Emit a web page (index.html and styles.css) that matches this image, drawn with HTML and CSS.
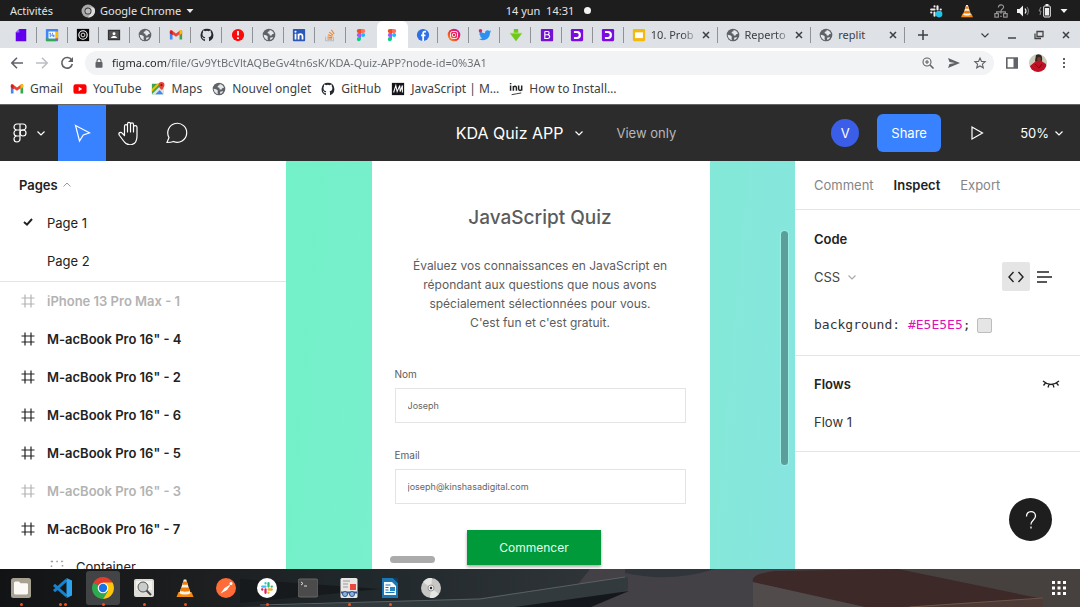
FILE: index.html
```html
<!DOCTYPE html>
<html lang="fr">
<head>
<meta charset="utf-8">
<title>KDA Quiz APP – Figma</title>
<link rel="stylesheet" href="styles.css">
</head>
<body>
<svg class="sprite" aria-hidden="true">
  <symbol id="globe" viewBox="0 0 16 16"><circle cx="8" cy="8" r="7.2" fill="#5f6368"/><path d="M8.600 2.200c2.600.2 4.600 2.200 5.100 4.400l-2 .6-1.200 1.600-1.800-.4-.3-1.800-2-.6.300-1.600 1.900-.6zM1.900 7.600l2.900.6 2 1.700-.5 1.400.4 2.600C4 13.300 2 10.800 1.900 7.600zM9.200 11l2.600-.5 1 .4c-.7 1.300-1.900 2.300-3.300 2.800z" fill="#e6e8eb"/></symbol>
  <symbol id="gmail" viewBox="0 0 16 16"><path d="M1 3.500v9.500h3V6z" fill="#4285f4"/><path d="M15 3.500v9.500h-3V6z" fill="#34a853"/><path d="M1 3.800C1 2.500 2.500 2 3.500 2.800L8 6.200l4.500-3.400c1-.8 2.500-.3 2.500 1V6l-3 2.200V7l-4 3-4-3v1.200L1 6z" fill="#ea4335"/><path d="M12 3.200l.5-.4c1-.8 2.500-.3 2.500 1V6l-3 2.200z" fill="#fbbc04"/><path d="M1 4v2l3 2.200v-5z" fill="#c5221f"/></symbol>
  <symbol id="github" viewBox="0 0 16 16"><path fill="#24292f" d="M8 .8a7.300 7.300 0 0 0-2.400 14.200V12.700c-2 .4-2.600-.9-2.800-1.400-.2-.5-.7-1-1-1.200.8-.4 1.500.5 1.800.9.600.9 1.400.8 2 .5.100-.5.300-.8.500-1-1.700-.2-3.300-.9-3.300-3.600 0-.8.300-1.500.8-2-.1-.3-.4-1 .1-2.100.6-.2 1.500.4 2.100.8a7 7 0 0 1 4.200 0c.6-.4 1.500-1 2.100-.8.400 1.100.2 1.800.1 2.100.5.500.8 1.200.8 2 0 2.700-1.600 3.400-3.300 3.600.4.3.6.8.6 1.500V15A7.300 7.300 0 0 0 8 .8z"/></symbol>
  <symbol id="figma" viewBox="0 0 16 16"><path d="M5.500 1H8v4.700H5.500a2.350 2.350 0 0 1 0-4.700z" fill="#f24e1e"/><path d="M8 1h2.500a2.350 2.350 0 0 1 0 4.700H8z" fill="#ff7262"/><path d="M5.500 5.700H8v4.600H5.500a2.300 2.300 0 0 1 0-4.600z" fill="#a259ff"/><circle cx="10.400" cy="8" r="2.350" fill="#1abcfe"/><path d="M5.500 10.300H8v2.400a2.400 2.400 0 1 1-2.500-2.400z" fill="#0acf83"/></symbol>
  <symbol id="dlet" viewBox="0 0 16 16"><rect x="1" y="1" width="14" height="14" rx="1.500" fill="#7c0be0"/><path d="M4.500 3.500H8a4.500 4.500 0 0 1 0 9H4.500v-2.300h3.300a2.200 2.200 0 0 0 0-4.400H4.500z" fill="#fff"/></symbol>
  <symbol id="vlc" viewBox="0 0 20 20"><path d="M3.500 14h13l2 5h-17z" fill="#f58a0b"/><path d="M8.800 1.500h2.400L15.500 15c-1.500 2-9.500 2-11 0z" fill="#f7f3ec"/><path d="M8.200 3.500h3.600l1 3.200H7.200zM6.300 9.500h7.400l1 3.300c-1.700 1.200-7.700 1.200-9.400 0z" fill="#f07c08"/></symbol>
  <symbol id="down" viewBox="0 0 10 10"><path d="M1.500 3.500L5 7l3.500-3.500" fill="none" stroke="currentColor" stroke-width="1.200"/></symbol>
  <symbol id="cross" viewBox="0 0 10 10"><path d="M2 2l6 6M8 2L2 8" fill="none" stroke="currentColor" stroke-width="1.500"/></symbol>
  <symbol id="frame" viewBox="0 0 14 14"><path d="M4 .5v13M10 .5v13M.5 4h13M.5 10h13" fill="none" stroke="currentColor" stroke-width="1.200"/></symbol>
  <symbol id="slack" viewBox="0 0 16 16"><g fill="none" stroke-width="2.600" stroke-linecap="round"><path d="M6.300 2.500v.3M2.500 6.300h3.800" stroke="#36c5f0"/><path d="M9.700 2.500v3.800M13.300 6.300h.2" stroke="#2eb67d"/><path d="M9.700 9.700h3.800M9.700 13.500v-.2" stroke="#ecb22e"/><path d="M6.300 9.700v3.800M2.500 9.700h.2" stroke="#e01e5a"/></g></symbol>
</svg>

<header class="system">
  <div class="system-left"><button class="sys-btn">Activités</button>
    <button class="sys-btn"><svg class="i13" viewBox="0 0 14 14"><circle cx="7" cy="7" r="6.500" fill="#aaa"/><path d="M7 3.500h6A6.500 6.500 0 0 1 7 13.500L10 9z" fill="#ddd"/><circle cx="7" cy="7" r="3.500" fill="#333"/><circle cx="7" cy="7" r="2.600" fill="#bbb"/></svg>Google Chrome<svg class="i8" viewBox="0 0 8 8"><path d="M.5 2h7L4 6z" fill="#e8e8e8"/></svg></button></div>
  <button class="sys-btn clock">14 yun&nbsp; 14:31</button>
  <div class="system-right"><span class="notice"></span>
    <div class="tray">
      <svg class="i13" viewBox="0 0 16 16"><path d="M6.300 2.500v.3M2.500 6.300h3.800M9.700 2.500v3.800M13.300 6.300h.2M6.300 9.700v3.800M2.500 9.700h.2" stroke="#eee" stroke-width="2.400" stroke-linecap="round"/><circle cx="11.500" cy="11.500" r="3.800" fill="#20c5e8"/></svg>
      <svg class="i13 gap-a" viewBox="0 0 20 20"><use href="#vlc"/></svg>
      <svg class="i13" viewBox="0 0 16 16"><g fill="none" stroke="#999" stroke-width="1.300"><path d="M5 4c0-4 6-4 6-.5C11 6 8 5.500 8 8M3 11V9h10v2M8 8v3"/><rect x="1" y="11" width="4" height="4"/><rect x="11" y="11" width="4" height="4"/><path d="M7 14h2"/></g></svg>
      <svg class="i13" viewBox="0 0 14 14"><path d="M1 5h2.500L7 1.500v11L3.500 9H1z" fill="#f2f2f2"/><path d="M9 4.500q2 2.500 0 5" fill="none" stroke="#f2f2f2" stroke-width="1.200"/><path d="M11 3q3 4 0 8" fill="none" stroke="#777" stroke-width="1.200"/></svg>
      <svg class="i13" viewBox="0 0 14 14"><path d="M3 3L1 7h2l-1 4" fill="none" stroke="#888"/><rect x="5.700" y="2" width="6.600" height="11" rx="1" fill="none" stroke="#eee"/><path d="M7 4h4v7.500H7zM7.500 0h3v2h-3z" fill="#eee"/></svg>
      <svg class="i8" viewBox="0 0 8 8"><path d="M.5 2h7L4 6z" fill="#f2f2f2"/></svg>
    </div></div>
</header>

<nav class="tabstrip" aria-label="Onglets">
  <div class="tabs">
    <button class="tab" aria-label="Formulaire"><svg viewBox="0 0 16 16"><path d="M6 1h8v14H2V5z" fill="#6200ee"/><path d="M6 1v4H2z" fill="#9a5cff"/></svg></button>
    <button class="tab" aria-label="Agenda"><svg viewBox="0 0 16 16"><rect x="1" y="1" width="14" height="14" rx="1" fill="#4285f4"/><path d="M12 4h3v8h-3z" fill="#fbbc04"/><path d="M1 12h11v3H1z" fill="#34a853"/><path d="M12 12h3l-3 3z" fill="#ea4335"/><path d="M4 4h8v8H4z" fill="#fff"/><path d="M5 6.200l1-.5V10.500M8.800 5.500L7.700 9h3M10 7.500v3" fill="none" stroke="#3b78e7"/></svg></button>
    <button class="tab" aria-label="Cercle"><svg viewBox="0 0 16 16"><rect x="1" y="1" width="14" height="14" fill="#080808"/><g fill="none" stroke="#fff"><circle cx="8" cy="8" r="4.800" stroke-width="1.300"/><circle cx="8" cy="8" r="2.200"/></g></svg></button>
    <button class="tab" aria-label="Contacts"><svg viewBox="0 0 16 16"><rect x="1" y="2" width="14" height="12" fill="#343434"/><rect x="2.500" y="3.500" width="11" height="9" fill="#555"/><circle cx="8" cy="6.500" r="1.700" fill="#fff"/><path d="M4.500 11.500c1-3 6-3 7 0z" fill="#fff"/></svg></button>
    <button class="tab" aria-label="Web"><svg><use href="#globe"/></svg></button>
    <button class="tab" aria-label="Gmail"><svg><use href="#gmail"/></svg></button>
    <button class="tab" aria-label="GitHub"><svg><use href="#github"/></svg></button>
    <button class="tab" aria-label="Alerte"><svg viewBox="0 0 16 16"><circle cx="8" cy="8" r="7" fill="#f90b0b"/><path d="M8 3.500v5M8 10.500v2" stroke="#fff" stroke-width="2"/></svg></button>
    <button class="tab" aria-label="Web"><svg><use href="#globe"/></svg></button>
    <button class="tab" aria-label="LinkedIn"><svg viewBox="0 0 16 16"><rect x="1" y="1" width="14" height="14" rx="1" fill="#2a57b8"/><circle cx="4" cy="4.300" r="1.200" fill="#fff"/><path d="M4 6.500V13M7.500 6.500V13M7.500 9.500c0-3 4.500-3.500 4.500 0V13" fill="none" stroke="#fff" stroke-width="2"/></svg></button>
    <button class="tab" aria-label="Stack Overflow"><svg viewBox="0 0 16 16"><path d="M3 10v4.500h9V10" fill="none" stroke="#bcbbbb" stroke-width="1.200"/><path d="M5 12.500h5.500M5 10.300l5.500.7M5.600 7.600l5.200 1.900M7 4.800l4.500 3.300M9.500 2l3.200 4.700" stroke="#f48024" stroke-width="1.200"/></svg></button>
    <button class="tab no-line" aria-label="Figma"><svg><use href="#figma"/></svg></button>
    <button class="tab active no-line" aria-label="KDA Quiz APP" aria-current="page"><svg><use href="#figma"/></svg></button>
    <button class="tab" aria-label="Facebook"><svg viewBox="0 0 16 16"><circle cx="8" cy="8" r="7" fill="#2f6fe4"/><path d="M11.500 4H10c-1.300 0-1.800.8-1.800 2v9M5.800 8.500h5" fill="none" stroke="#fff" stroke-width="2"/></svg></button>
    <button class="tab" aria-label="Instagram"><svg viewBox="0 0 16 16"><defs><linearGradient id="ig" x1="0" y1="1" x2="1" y2="0"><stop stop-color="#ffae1a"/><stop offset=".5" stop-color="#f3223f"/><stop offset="1" stop-color="#c217c9"/></linearGradient></defs><circle cx="8" cy="8" r="7.200" fill="url(#ig)"/><g fill="none" stroke="#fff"><rect x="4" y="4" width="8" height="8" rx="2"/><circle cx="8" cy="8" r="2"/></g></svg></button>
    <button class="tab" aria-label="Twitter"><svg viewBox="0 0 16 16"><path d="M1 12.500c1.700.1 3-.3 4-1.200-1.400-.1-2.300-.9-2.600-2h1.200C2.200 8.800 1.500 7.800 1.500 6.400l1.200.3C1.600 5.700 1.400 4.200 2 3c1.600 1.800 3.500 2.800 6 3-.4-3.200 3.200-4.500 5-2.700l1.900-.7-1.200 1.700 1.500-.4-1.500 1.600C13.800 12.500 7 16 1 12.500z" fill="#2a91f0"/><circle cx="2.800" cy="3" r="2" fill="#e0245e"/></svg></button>
    <button class="tab" aria-label="Téléchargement"><svg viewBox="0 0 16 16"><path d="M5.500 1h5v5H15l-7 9-7-9h4.500z" fill="#70c81d"/><path d="M1 6h14M5.500 4L8 6.500 10.500 4" stroke="#9be34d" fill="none"/></svg></button>
    <button class="tab" aria-label="Bootstrap"><svg viewBox="0 0 16 16"><rect x="1" y="1" width="14" height="14" rx="1" fill="#7412d4"/><path d="M5.500 4h3.200c2.300 0 2.300 3.700 0 3.700H5.500M5.500 4v8h3.500c2.700 0 2.700-4.300 0-4.300" fill="none" stroke="#fff" stroke-width="1.300"/></svg></button>
    <button class="tab" aria-label="Digital"><svg><use href="#dlet"/></svg></button>
    <button class="tab" aria-label="Digital"><svg><use href="#dlet"/></svg></button>
    <button class="tab wide"><svg viewBox="0 0 16 16"><rect x="1" y="1" width="14" height="14" rx="1.500" fill="#f2b90f"/><rect x="3.500" y="5" width="9" height="6.500" fill="#fff"/></svg><span class="tab-name fade">10. Prob</span><svg class="i10"><use href="#cross"/></svg></button>
    <button class="tab wide"><svg><use href="#globe"/></svg><span class="tab-name fade">Reperto</span><svg class="i10"><use href="#cross"/></svg></button>
    <button class="tab wide"><svg><use href="#globe"/></svg><span class="tab-name">replit</span><svg class="i10"><use href="#cross"/></svg></button>
  </div>
  <div class="window-tools">
    <button class="plain" aria-label="Nouvel onglet"><svg class="i13" viewBox="0 0 14 14"><path d="M7 2v10M2 7h10" stroke="#3c4043" stroke-width="1.500"/></svg></button>
    <div class="window-buttons">
      <button class="plain" aria-label="Rechercher"><svg class="i10"><use href="#down"/></svg></button>
      <button class="plain" aria-label="Réduire"><svg class="i10" viewBox="0 0 10 10"><path d="M1 8h8" stroke="#444" stroke-width="1.500"/></svg></button>
      <button class="plain" aria-label="Restaurer"><svg class="i10" viewBox="0 0 10 10"><path d="M3 1.500h6v5H3zM1 3.500v5h6" fill="none" stroke="#444" stroke-width="1.300"/></svg></button>
      <button class="plain" aria-label="Fermer"><svg class="i10"><use href="#cross"/></svg></button>
    </div>
  </div>
</nav>

<div class="address-row">
  <button class="plain" aria-label="Retour"><svg class="i13" viewBox="0 0 14 14"><path d="M13 7H2M7 1.800L1.800 7 7 12.200" fill="none" stroke="#5f6368" stroke-width="1.600"/></svg></button>
  <button class="plain" aria-label="Suivant"><svg class="i13" viewBox="0 0 14 14"><path d="M1 7h11M7 1.800L12.200 7 7 12.200" fill="none" stroke="#bcbfc3" stroke-width="1.600"/></svg></button>
  <button class="plain" aria-label="Actualiser"><svg class="i13" viewBox="0 0 14 14"><path d="M11.600 4A5.300 5.300 0 1 0 12.300 8" fill="none" stroke="#5f6368" stroke-width="1.600"/><path d="M13 1v5H8z" fill="#5f6368"/></svg></button>
  <div class="omnibox">
    <svg class="i10" viewBox="0 0 10 10"><rect x="1.500" y="4" width="7" height="5.800" rx=".8" fill="#5f6368"/><path d="M3 4.500V3a2 2 0 0 1 4 0v1.500" fill="none" stroke="#5f6368" stroke-width="1.100"/></svg>
    <input class="url" type="text" aria-label="Adresse" value="figma.com/file/Gv9YtBcVltAQBeGv4tn6sK/KDA-Quiz-APP?node-id=0%3A1">
    <button class="plain" aria-label="Zoom"><svg class="i13" viewBox="0 0 14 14"><g fill="none" stroke="#5f6368" stroke-width="1.100"><circle cx="6" cy="6" r="4"/><path d="M4 6h4M6 4v4"/><path d="M9 9l3.500 3.500" stroke-width="1.600"/></g></svg></button>
    <button class="plain" aria-label="Partager"><svg class="i13" viewBox="0 0 14 14"><path d="M1 2l12 5-12 5 1.500-3.900L8 7 2.500 5.900z" fill="#5f6368"/></svg></button>
    <button class="plain" aria-label="Favori"><svg class="i13" viewBox="0 0 14 14"><path d="M7 2l1.500 3.400 3.700.3-2.800 2.500.9 3.600L7 9.900l-3.300 1.900.9-3.600-2.800-2.500 3.700-.3z" fill="none" stroke="#5f6368" stroke-width="1.100"/></svg></button>
  </div>
  <div class="address-tools">
    <button class="plain" aria-label="Panneau latéral"><svg class="i13" viewBox="0 0 14 14"><path d="M1.800 2h10.400v10H1.800z" fill="none" stroke="#5f6368" stroke-width="1.600"/><path d="M8.500 2H12v10H8.500z" fill="#5f6368"/></svg></button>
    <button class="plain" aria-label="Profil"><svg class="i18" viewBox="0 0 18 18"><defs><clipPath id="pc"><circle cx="9" cy="9" r="9"/></clipPath></defs><g clip-path="url(#pc)"><path d="M0 0h18v18H0z" fill="#c9cdbb"/><path d="M7 1c4-2 7 0 6 6l-4 3-3-3z" fill="#38231f"/><path d="M1 12l6-5 4-1 6 4 1 8H2z" fill="#bf1025"/><circle cx="10" cy="5" r="2" fill="#6f4235"/><path d="M6 10l4 4 3-4" stroke="#6d0715" fill="none"/></g></svg></button>
    <button class="plain" aria-label="Menu"><svg class="i13" viewBox="0 0 14 14"><path d="M7 2v2M7 6v2M7 10v2" stroke="#5f6368" stroke-width="2"/></svg></button>
  </div>
</div>

<nav class="bookmarks" aria-label="Favoris">
  <a href="#"><svg><use href="#gmail"/></svg>Gmail</a>
  <a href="#"><svg viewBox="0 0 16 16"><rect x=".5" y="2.500" width="15" height="11" rx="2.500" fill="#f00"/><path d="M6.500 5.500v5l4-2.500z" fill="#fff"/></svg>YouTube</a>
  <a href="#"><svg viewBox="0 0 16 16"><path d="M1 2h13v12H1z" fill="#34a853"/><path d="M1 14L10 5l4 4v5z" fill="#dfe3e6"/><path d="M1 11l9-9H7L1 8z" fill="#fbbc04"/><path d="M5 14l5-5 4 5z" fill="#4285f4"/><path d="M12 0a3.400 3.400 0 0 1 3.400 3.400C15.400 6 12 9 12 9S8.600 6 8.600 3.400A3.400 3.400 0 0 1 12 0z" fill="#ea4335"/><circle cx="12" cy="3.500" r="1.200" fill="#811411"/></svg>Maps</a>
  <a href="#"><svg><use href="#globe"/></svg>Nouvel onglet</a>
  <a href="#"><svg><use href="#github"/></svg>GitHub</a>
  <a href="#"><svg viewBox="0 0 16 16"><path d="M1 1h14v14H1z" fill="#15141a"/><path d="M3 12L5.500 4 7 11l3-7 .5 7L13 4v8" fill="none" stroke="#fff" stroke-width="1.200"/></svg>JavaScript | M…</a>
  <a href="#"><svg viewBox="0 0 16 16"><g fill="none" stroke="#222" stroke-width="1.700"><path d="M1.800 4v6M1.800 1v1.500M5 10V4.500M5 6c1-2 3.500-1.500 3.500.5V10M11 4v3.800c0 2.500 3.500 2.500 3.500 0V4v6"/><path d="M3 14.500q5-1 11-2" stroke-width="1"/></g></svg>How to Install…</a>
</nav>

<header class="toolbar">
  <div class="tools">
    <button class="tool menu" aria-label="Menu Figma"><svg class="logo" viewBox="0 0 14 20"><g fill="none" stroke="#fff" stroke-width="1.200"><path d="M7 1H4a3 3 0 0 0 0 6h3zM7 1h3a3 3 0 0 1 0 6H7zM7 7H4a3 3 0 0 0 0 6h3zM7 13H4a3 3 0 1 0 3 3z"/><circle cx="10" cy="10" r="3"/></g></svg><svg class="i10"><use href="#down"/></svg></button>
    <button class="tool selected" aria-label="Déplacer"><svg class="i20" viewBox="0 0 20 20"><path d="M3.500 2.500l14 7.300-6.200 2.200L7.500 18z" fill="none" stroke="#fff" stroke-width="1.200"/></svg></button>
    <button class="tool" aria-label="Main"><svg class="i24" viewBox="0 0 24 24"><path d="M6.500 14.500V5.200c0-2.200 3-2.200 3 0V11 3c0-2.200 3-2.200 3 0v8-7.500c0-2.200 3-2.200 3 0V11 6.200c0-2 3.500-2 3.500 0V15c0 11-10 10-13 5.500l-4.500-6c-2-3 1.500-4 3-2z" fill="none" stroke="#fff" stroke-width="1.200" stroke-linejoin="round"/></svg></button>
    <button class="tool" aria-label="Commenter"><svg class="i24" viewBox="0 0 24 24"><path d="M2 21.500l2-5A9.500 9.500 0 1 1 8.500 20.500c-2 .9-4.500 1-6.500 1z" fill="none" stroke="#fff" stroke-width="1.200"/></svg></button>
  </div>
  <div class="file-info"><button class="file-name">KDA Quiz APP<svg class="i10"><use href="#down"/></svg></button><span class="view-only">View only</span></div>
  <div class="toolbar-right">
    <span class="avatar">V</span>
    <button class="share">Share</button>
    <button class="play" aria-label="Présenter"><svg class="i16" viewBox="0 0 16 16"><path d="M3 2v12l10.500-6z" fill="none" stroke="#fff" stroke-width="1.200"/></svg></button>
    <button class="zoom">50%<svg class="i10"><use href="#down"/></svg></button>
  </div>
</header>

<main class="workspace">
  <aside class="left-panel">
    <section class="pages">
      <button class="pages-title">Pages<svg class="i10" viewBox="0 0 10 10"><path d="M1.500 6.500L5 3l3.500 3.500" fill="none" stroke="#999"/></svg></button>
      <button class="row"><svg viewBox="0 0 14 14"><path d="M3 6l3 2.700L11 3" fill="none" stroke="#222" stroke-width="2"/></svg>Page 1</button>
      <button class="row"><svg></svg>Page 2</button>
    </section>
    <section class="layers">
      <button class="row bold muted"><svg><use href="#frame"/></svg>iPhone 13 Pro Max - 1</button>
      <button class="row bold"><svg><use href="#frame"/></svg>M-acBook Pro 16" - 4</button>
      <button class="row bold"><svg><use href="#frame"/></svg>M-acBook Pro 16" - 2</button>
      <button class="row bold"><svg><use href="#frame"/></svg>M-acBook Pro 16" - 6</button>
      <button class="row bold"><svg><use href="#frame"/></svg>M-acBook Pro 16" - 5</button>
      <button class="row bold muted"><svg><use href="#frame"/></svg>M-acBook Pro 16" - 3</button>
      <button class="row bold"><svg><use href="#frame"/></svg>M-acBook Pro 16" - 7</button>
      <button class="row nested"><svg viewBox="0 0 14 14"><rect x="1.500" y="1.500" width="11" height="11" fill="none" stroke="#999" stroke-width="1.500" stroke-dasharray="1.500 3.300"/></svg>Container</button>
    </section>
  </aside>

  <section class="canvas">
    <form class="quiz">
      <h1>JavaScript Quiz</h1>
      <p>Évaluez vos connaissances en JavaScript en<br>répondant aux questions que nous avons<br>spécialement sélectionnées pour vous.<br>C'est fun et c'est gratuit.</p>
      <label for="nom">Nom</label>
      <input id="nom" type="text" value="Joseph">
      <label for="email">Email</label>
      <input id="email" type="text" value="joseph@kinshasadigital.com">
      <button class="start" type="button">Commencer</button>
    </form>
    <span class="scroll-y"></span><span class="scroll-x"></span>
  </section>

  <aside class="right-panel">
    <nav class="panel-tabs"><button>Comment</button><button class="on">Inspect</button><button>Export</button></nav>
    <section class="panel-section">
      <h2>Code</h2>
      <div class="panel-row language"><button class="lang">CSS<svg class="i10"><use href="#down"/></svg></button>
        <div class="modes"><button class="mode on" aria-label="Code"><svg class="i18" viewBox="0 0 18 18"><path d="M6.500 4L2 9l4.500 5M11.500 4L16 9l-4.500 5" fill="none" stroke="#222" stroke-width="1.400"/></svg></button><button class="mode" aria-label="Liste"><svg class="i16" viewBox="0 0 16 16"><path d="M1 3h12M1 8h15M1 13h10" stroke="#222" stroke-width="1.400"/></svg></button></div></div>
      <div class="panel-row code"><code>background: <span class="hex">#E5E5E5</span>;</code><span class="swatch"></span></div>
    </section>
    <section class="panel-section flows">
      <div class="panel-row"><h2>Flows</h2><button class="plain" aria-label="Afficher"><svg class="i18" viewBox="0 0 18 18"><path d="M1 6q8 7 16 0M3.500 8L1.500 10.500M7 9.500L6 12.500M11 9.500l1 3M14.500 8l2 2.500" fill="none" stroke="#222" stroke-width="1.300"/></svg></button></div>
      <button class="flow">Flow 1</button>
    </section>
    <button class="help" aria-label="Aide"><svg class="i20" viewBox="0 0 20 20"><path d="M5.500 6.500C5.500 0 14.500 0 14.500 6c0 4-4.500 4-4.500 8.500M10 16.500v2" fill="none" stroke="#fff" stroke-width="1.300"/></svg></button>
  </aside>
</main>

<footer class="dock">
  <svg class="wallpaper" viewBox="0 0 1080 38" preserveAspectRatio="none" aria-hidden="true">
    <defs><linearGradient id="wp"><stop stop-color="#121314"/><stop offset=".2" stop-color="#1d1f21"/><stop offset=".32" stop-color="#20272a"/><stop offset=".58" stop-color="#30363a"/></linearGradient></defs>
    <path d="M0 0h1080v38H0z" fill="url(#wp)"/>
    <path d="M240 10L380 20 240 34z" fill="#171a1c"/>
    <path d="M590 0h490v38H560z" fill="#434145"/>
    <path d="M625 0h90q-45 14-90 4z" fill="#30353b"/>
    <path d="M240 38L480 29 628 8v13l-50 17z" fill="#333a3e"/>
    <path d="M260 36L480 30 625 8" fill="none" stroke="#596064"/>
    <path d="M515 38l114-16-38 16z" fill="#14181d"/>
    <path d="M895 0h185v38H1010z" fill="#46403f"/>
    <path d="M753 13l130 25H753z" fill="#514b4b"/>
    <path d="M753 13q-3-8 22-11l123-2 145 30-130 8H865z" fill="#3c2928"/>
    <path d="M900 38l143-9v9z" fill="#4b3a36"/>
    <path d="M910 38l133-9" stroke="#6e5348"/>
  </svg>
  <nav class="apps" aria-label="Applications">
    <button class="app run" aria-label="Fichiers"><svg viewBox="0 0 20 20"><rect width="20" height="20" rx="2.500" fill="#a6a190"/><path d="M3 5q0-1.500 1.500-1.500H8l1.500 1.700h6Q17 5.200 17 6.500V15q0 1.500-1.500 1.500h-11Q3 16.500 3 15z" fill="#faf9f5"/></svg></button>
    <button class="app run two" aria-label="VS Code"><svg viewBox="0 0 20 20"><path d="M14.500 2L2 13.200M14.500 18L2 6.800" stroke="#1683cf" stroke-width="3"/><path d="M14.500 0L20 2.500v15L14.500 20z" fill="#2ba3ef"/></svg></button>
    <button class="app run current" aria-label="Chrome"><svg viewBox="0 0 22 22"><path d="M11 11L1.500 5.500A11 11 0 0 1 20.500 5.500z" fill="#e33b2e"/><path d="M11 11L1.500 5.500A11 11 0 0 0 11 22l5-8z" fill="#2da94f"/><path d="M11 11v-5.500h9.500A11 11 0 0 1 11 22l5-8z" fill="#fdc60a"/><circle cx="11" cy="11" r="5.300" fill="#fff"/><circle cx="11" cy="11" r="4.200" fill="#1a73e8"/></svg></button>
    <button class="app run" aria-label="Visionneur"><svg viewBox="0 0 20 20"><rect y="1" width="20" height="18" rx="2" fill="#deddd7"/><path d="M2 3h16v9H2z" fill="#f2f1ec"/><circle cx="9" cy="9" r="5" fill="#c9cdcc" stroke="#555"/><path d="M12.500 12.500L17 17" stroke="#444" stroke-width="2"/></svg></button>
    <button class="app run" aria-label="VLC"><svg><use href="#vlc"/></svg></button>
    <button class="app" aria-label="Postman"><svg viewBox="0 0 20 20"><circle cx="10" cy="10" r="10" fill="#ff6c37"/><path d="M4.500 15.500l4-5.500 6.500-4-4 6z" fill="#fff"/><circle cx="15" cy="5.500" r="1.500" fill="#fff"/></svg></button>
    <button class="app run" aria-label="Slack"><svg viewBox="0 0 20 20"><circle cx="10" cy="10" r="10" fill="#fff"/><use href="#slack" x="3" y="3" width="14" height="14"/></svg></button>
    <button class="app" aria-label="Terminal"><svg viewBox="0 0 20 20"><rect y="1" width="20" height="18" rx="2" fill="#4b4b4b" stroke="#666"/><path d="M3 4l2 1.500L3 7M6 8h3" fill="none" stroke="#ddd"/></svg></button>
    <button class="app run" aria-label="Documents"><svg viewBox="0 0 20 20"><rect x="1.500" width="17" height="20" rx="1.500" fill="#e9e7e5"/><path d="M4 3h7M4 6h5M4 9h5" stroke="#999"/><path d="M11 6h6v6h-6z" fill="#e74a3c"/><path d="M2 13.500h16v2H2z" fill="#31558b"/><g fill="#8fb0da" stroke="#31558b"><circle cx="6" cy="16" r="2.500"/><circle cx="13" cy="16" r="2.500"/></g></svg></button>
    <button class="app run" aria-label="Writer"><svg viewBox="0 0 20 20"><path d="M2 0h11l5 5v15H2z" fill="#1b77b4"/><path d="M13 0l5 5V0z" fill="#0c3c5e"/><path d="M4 4h8l4 4v9H4z" fill="#f7fafc"/><path d="M5.500 7h5M5.500 9.500h3M5.500 12h3M5.500 14.500h9" stroke="#1b77b4" stroke-width="1.200"/><path d="M10 9h5v4h-5z" fill="#2587c5"/></svg></button>
    <button class="app" aria-label="Disque"><svg viewBox="0 0 20 20"><circle cx="10" cy="10" r="10" fill="#c6c6c4"/><path d="M10 10L2 4q4-5 9-4zM10 10l8 6q-4 5-9 4z" fill="#e5e5e3"/><circle cx="10" cy="10" r="3" fill="#eee" stroke="#999"/><circle cx="10" cy="10" r="1.200" fill="#222"/></svg></button>
  </nav>
  <button class="plain grid-btn" aria-label="Applications"><svg viewBox="0 0 16 16"><path d="M2.500 1v14M8 1v14M13.500 1v14" stroke="#fff" stroke-width="3" stroke-dasharray="3 2.500"/></svg></button>
</footer>
</body>
</html>
```
FILE: styles.css
```css
* { box-sizing: border-box; }
body { margin: 0; height: 100vh; display: flex; flex-direction: column; overflow: hidden; background: #fff; color: #222; font: 13px/20px Inter, sans-serif; }
button { margin: 0; padding: 0; border: 0; background: none; color: inherit; font: inherit; }
svg { display: block; flex: none; }
.sprite { position: absolute; width: 0; height: 0; }
.plain { display: flex; align-items: center; justify-content: center; }
.i8 { width: 8px; height: 8px; }
.i10 { width: 10px; height: 10px; }
.i13 { width: 14px; height: 14px; }
.i16 { width: 16px; height: 16px; }
.i18 { width: 18px; height: 18px; }
.i20 { width: 20px; height: 20px; }
.i24 { width: 24px; height: 24px; }

.system, .tabstrip, .address-row, .bookmarks { font-family: "Noto Sans", sans-serif; flex: none; }
.system { display: grid; grid-template-columns: 1fr auto 1fr; align-items: center; height: 21px; background: #1d1d1d; color: #e4e4e4; font-size: 11px; }
.system-left { display: flex; gap: 28px; padding-left: 10px; }
.sys-btn { display: flex; align-items: center; gap: 5px; white-space: nowrap; }
.system-right { display: flex; align-items: center; justify-content: space-between; padding: 0 12px 0 10px; }
.notice { width: 7px; height: 7px; border-radius: 50%; background: #f2f2f2; }
.tray { display: flex; align-items: center; gap: 8px; }
.gap-a { margin: 0 12px 0 9px; }

.tabstrip { display: flex; height: 27px; background: #dee1e6; color: #3c4043; font-size: 11px; }
.tabs { flex: 1; display: flex; min-width: 0; padding-left: 6px; }
.tab { position: relative; flex: 1 1 31px; min-width: 0; display: flex; align-items: center; justify-content: center; }
.tab svg { width: 14px; height: 14px; }
.tab::after { content: ""; position: absolute; right: 0; top: 6px; width: 1px; height: 16px; background: #8f9297; }
.tab.no-line::after { display: none; }
.tab.active { background: #fff; border-radius: 6px 6px 0 0; }
.tab.wide { flex: 3 1 94px; justify-content: flex-start; gap: 5px; padding: 0 7px 0 8px; }
.tab.wide .i10 { width: 10px; height: 10px; }
.tab-name { flex: 1; text-align: left; white-space: nowrap; }
.fade { mask-image: linear-gradient(90deg, #000 70%, #0003); }
.window-tools { width: 175px; flex: none; display: flex; align-items: center; justify-content: space-between; padding: 0 9px 0 11px; }
.window-buttons { display: flex; align-items: center; gap: 17px; }

.address-row { display: flex; align-items: center; height: 29px; padding-left: 10px; gap: 11px; }
.omnibox { flex: 1; display: flex; align-items: center; gap: 12px; height: 24px; padding: 0 7px 0 9px; border-radius: 12px; background: #f1f3f4; }
.url { flex: 1; min-width: 0; margin-left: -4px; padding: 0; border: 0; outline: 0; font: 11px/20px "Noto Sans", sans-serif; color: transparent; background: linear-gradient(90deg, #202124 54px, #686c71 54px); -webkit-background-clip: text; background-clip: text; }
.address-tools { display: flex; align-items: center; gap: 10px; padding-right: 9px; }

.bookmarks { display: flex; align-items: center; gap: 10px; height: 27px; padding: 0 10px 3px; font-size: 12px; }
.bookmarks a { display: flex; align-items: center; gap: 6px; color: #3c4043; text-decoration: none; white-space: nowrap; }
.bookmarks svg { width: 14px; height: 14px; }

.toolbar { flex: none; display: grid; grid-template-columns: 1fr auto 1fr; align-items: stretch; height: 57px; border-top: 1px solid #666; background: #2c2c2c; color: #fff; }
.tools { display: flex; }
.tool { display: flex; align-items: center; justify-content: center; width: 47px; }
.tool.menu { width: 58px; gap: 9px; }
.tool.selected { width: 48px; background: #3982ff; }
.logo { width: 14px; height: 20px; }
.file-info { display: flex; align-items: center; gap: 32px; padding-left: 52px; }
.file-name { display: flex; align-items: center; gap: 11px; font-size: 16px; }
.view-only { color: #b8b8b8; }
.toolbar-right { display: flex; align-items: center; justify-content: flex-end; padding-right: 16px; }
.avatar { width: 28px; height: 28px; border-radius: 50%; background: #3b5ee8; line-height: 28px; text-align: center; }
.share { width: 64px; height: 38px; margin-left: 18px; border-radius: 6px; background: #3982ff; }
.play { margin-left: 28px; }
.zoom { display: flex; align-items: center; gap: 5px; margin-left: 35px; }

.workspace { flex: 1; min-height: 0; display: flex; }
.left-panel { flex: none; width: 286px; overflow: hidden; }
.pages { padding: 5px 0 1px; border-bottom: 1px solid #e5e5e5; }
.pages-title { display: flex; align-items: center; gap: 4px; height: 38px; padding-left: 19px; font-weight: 600; }
.row { display: flex; align-items: center; gap: 12px; width: 100%; height: 38px; padding-left: 21px; white-space: nowrap; }
.row svg { width: 14px; height: 14px; }
.row.bold { font-weight: 600; }
.row.muted { color: #b3b3b3; }
.row.nested { padding-left: 50px; }

.canvas { position: relative; flex: 1; min-width: 0; display: flex; justify-content: center; overflow: hidden; background: linear-gradient(95deg, #73f1c8, #77efcc 18%, #84e8d9 84%, #87e5e0); }
.quiz { width: 338px; padding: 43px 24px 0 23px; background: #fff; color: #5c5c5c; display: flex; flex-direction: column; }
.quiz h1 { margin: 0 0 24px; font-size: 19px; line-height: 28px; font-weight: 500; text-align: center; }
.quiz p { margin: 0 0 32px; font-size: 12px; line-height: 19px; text-align: center; white-space: nowrap; }
.quiz label { margin-bottom: 4px; font-size: 10px; line-height: 20px; }
.quiz input { flex: none; width: 100%; height: 35px; margin-bottom: 22px; padding: 0 12px; border: 1px solid #e4e4e4; border-radius: 0; background: #fff; color: #666; font: 9px Inter, sans-serif; }
.start { align-self: center; flex: none; width: 134px; height: 35px; margin: 4px 12px 0 0; background: #009a3a; color: #e3ffec; font-size: 12px; box-shadow: 0 2px 3px #0005; }
.scroll-y { position: absolute; right: 7px; top: 70px; width: 7px; height: 234px; border-radius: 4px; background: #5a9f9a; box-shadow: 0 0 0 1px #9deee4; }
.scroll-x { position: absolute; left: 104px; bottom: 6px; width: 45px; height: 7px; border-radius: 4px; background: #ababab; }

.right-panel { position: relative; flex: none; width: 285px; }
.panel-tabs { display: flex; gap: 20px; height: 49px; padding-left: 19px; border-bottom: 1px solid #e5e5e5; color: #858585; }
.panel-tabs .on { color: #222; font-weight: 600; }
.panel-section { padding: 19px 22px 15px 19px; border-bottom: 1px solid #e5e5e5; }
.panel-section h2 { margin: 0; font-size: 13px; line-height: 20px; font-weight: 600; }
.panel-row { display: flex; align-items: center; justify-content: space-between; }
.panel-row.language { margin: 13px 0 19px; }
.lang { display: flex; align-items: center; gap: 7px; color: #444; }
.lang svg { color: #aaa; }
.modes { display: flex; }
.mode { display: flex; align-items: center; justify-content: center; width: 28px; height: 29px; border-radius: 2px; }
.mode.on { background: #e5e5e5; }
.panel-row.code { justify-content: flex-start; gap: 6px; height: 30px; }
.code code { font: 13px/30px "DejaVu Sans Mono", monospace; color: #333; }
.hex { color: #e010b8; }
.swatch { width: 15px; height: 15px; border: 1px solid #bdbdbd; border-radius: 2px; background: #e5e5e5; }
.panel-section.flows { padding: 18px 20px 19px 19px; }
.flow { display: block; margin-top: 18px; color: #333; }
.help { position: absolute; right: 28px; bottom: 28px; width: 43px; height: 43px; border-radius: 50%; background: #1e1e1e; display: flex; align-items: center; justify-content: center; }

.dock { position: relative; flex: none; display: flex; align-items: center; justify-content: space-between; height: 38px; padding: 0 13px 0 4px; background: #222; }
.wallpaper { position: absolute; inset: 0; width: 100%; height: 100%; }
.apps { position: relative; display: flex; gap: 7px; }
.app { position: relative; display: flex; align-items: center; justify-content: center; width: 34px; height: 34px; border-radius: 3px; }
.app svg { width: 20px; height: 20px; }
.app.current { background: #ffffff30; }
.app.current svg { width: 22px; height: 22px; }
.app.run::after { content: ""; position: absolute; left: 16px; bottom: -1px; width: 3px; height: 3px; border-radius: 50%; background: #e95420; }
.app.two::after { left: 14px; box-shadow: 5px 0 #e95420; }
.grid-btn { position: relative; }
.grid-btn svg { width: 16px; height: 16px; }
```
